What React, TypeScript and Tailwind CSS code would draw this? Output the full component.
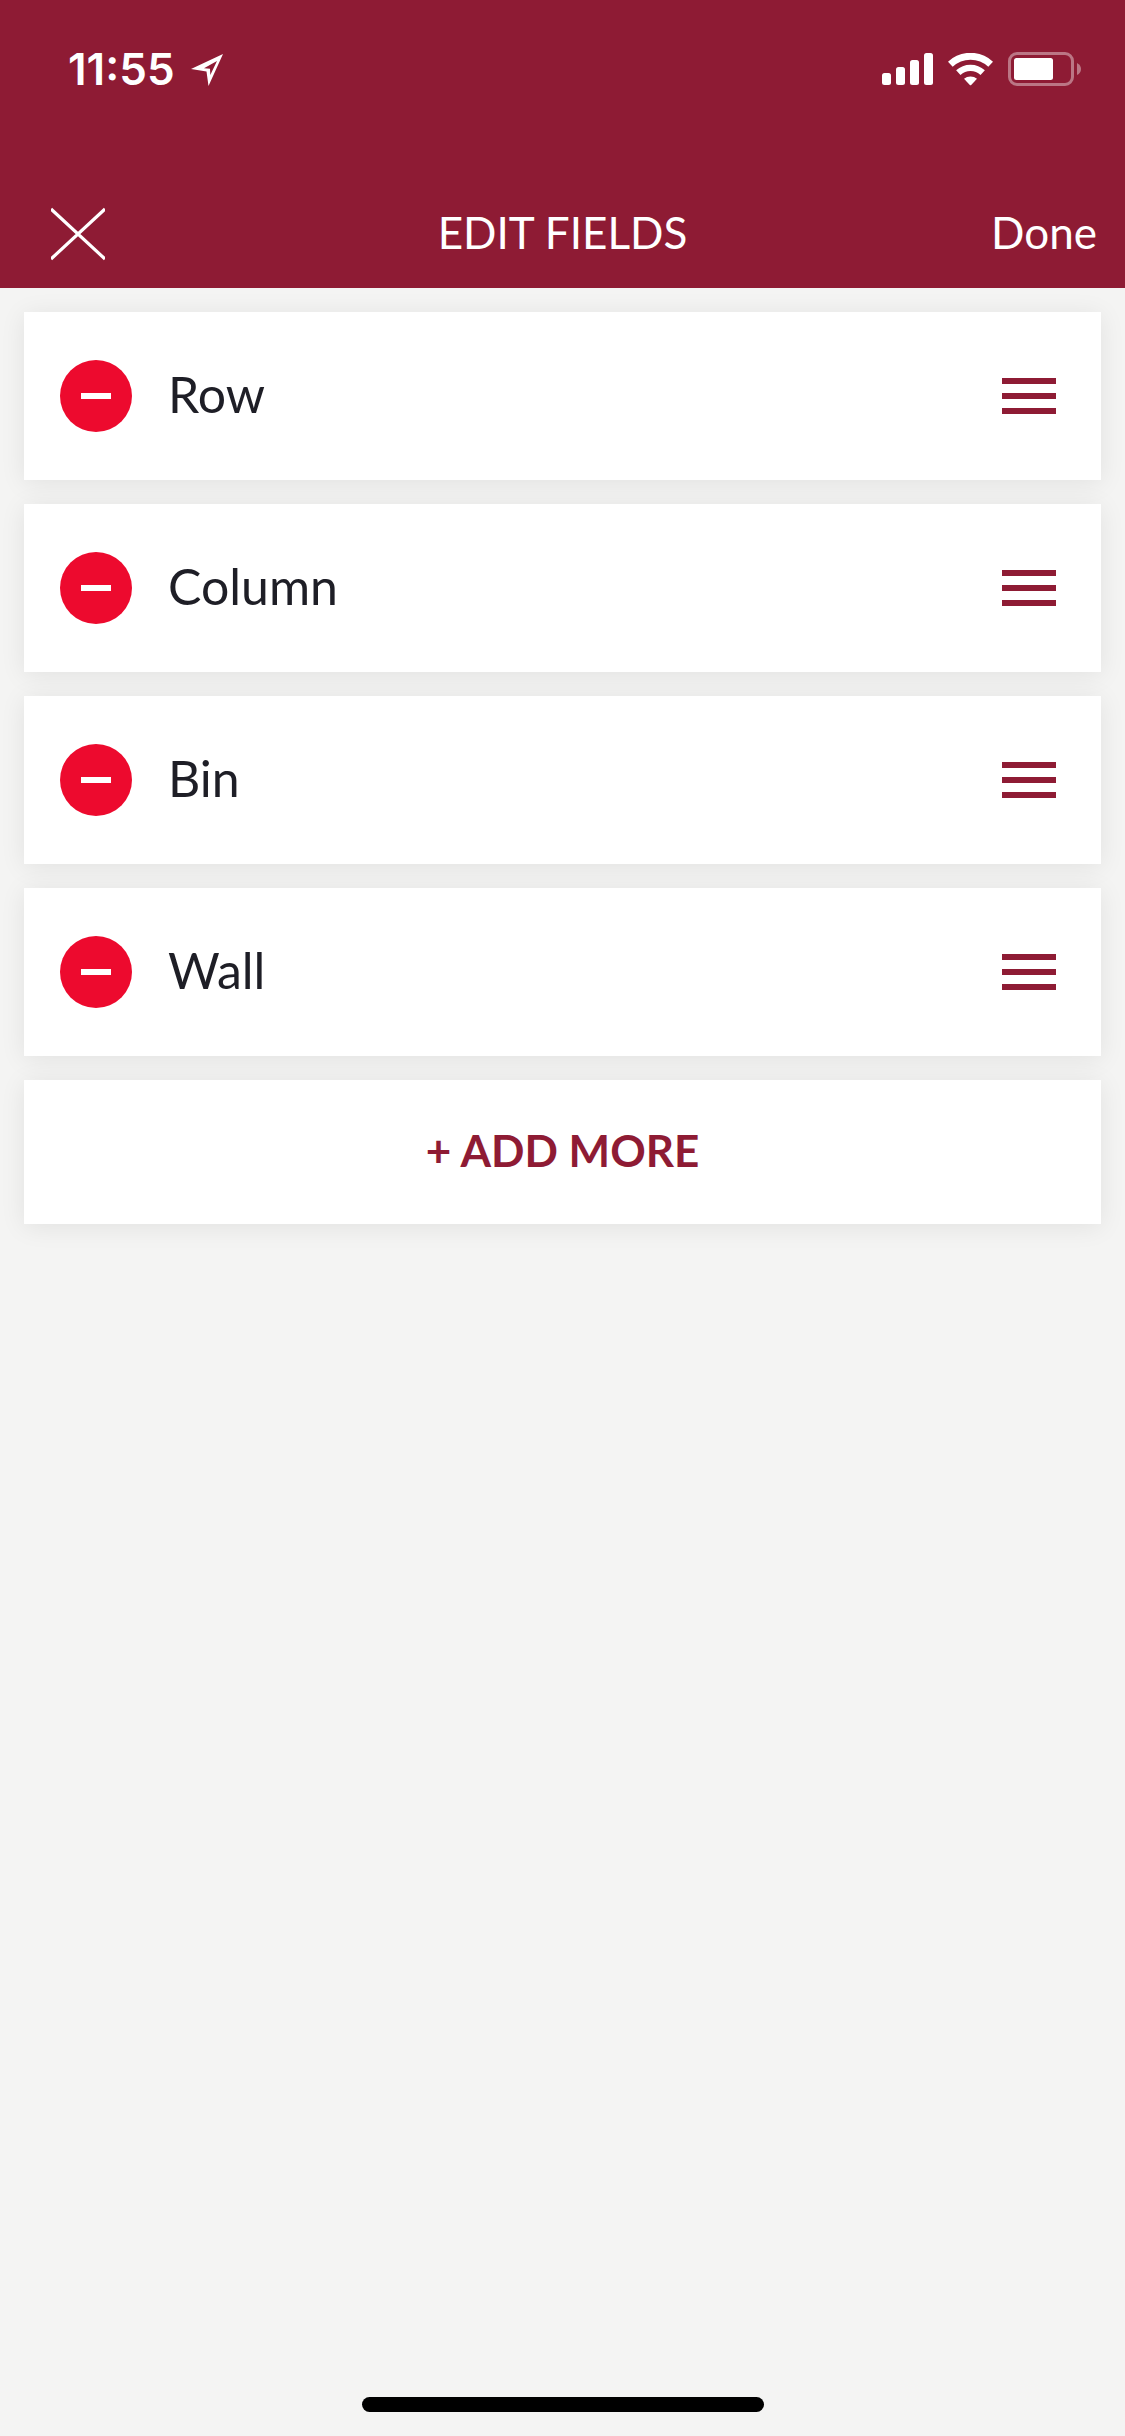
import { useState } from 'react';

const initialFields = ['Row', 'Column', 'Bin', 'Wall'];

function StatusBar() {
  return (
    <div className="flex h-[138px] items-center justify-between pr-11 pl-[68px]">
      <div className="flex items-center gap-4 font-['Inter',sans-serif] text-[44px] leading-none font-semibold">
        <span>11:55</span>
        {/* Location arrow */}
        <svg width="33" height="33" viewBox="0 0 33 33" aria-hidden="true">
          <path
            fill="currentColor"
            fillRule="evenodd"
            d="M0 16 32 1 17.5 33 15.5 18.5ZM13 15.2 19 15.8 19.3 22 26 8Z"
          />
        </svg>
      </div>

      <div className="flex items-center gap-[15px]">
        {/* Signal */}
        <svg width="51" height="33" viewBox="0 0 51 33" fill="currentColor" aria-hidden="true">
          <rect x="0" y="20" width="9" height="12" rx="2.5" />
          <rect x="14" y="14" width="9" height="18" rx="2.5" />
          <rect x="28" y="7" width="9" height="25" rx="2.5" />
          <rect x="42" y="0" width="9" height="32" rx="2.5" />
        </svg>

        {/* Wifi */}
        <svg width="45" height="33" viewBox="0 0 45 33" fill="none" aria-hidden="true">
          <path d="M2.3 11.3a29.5 29.5 0 0 1 40.4 0" stroke="currentColor" strokeWidth="7" />
          <path d="M10.3 19.6a18 18 0 0 1 24.4 0" stroke="currentColor" strokeWidth="6.4" />
          <path d="M16 25.8a10 10 0 0 1 13 0L23.2 32q-.7.6-1.4 0Z" fill="currentColor" />
        </svg>

        {/* Battery */}
        <svg width="73" height="34" viewBox="0 0 73 34" aria-hidden="true">
          <rect
            x="1.5"
            y="1.5"
            width="63"
            height="31"
            rx="7.5"
            fill="none"
            stroke="currentColor"
            strokeOpacity="0.4"
            strokeWidth="3"
          />
          <rect x="6" y="6" width="39" height="22" rx="2.5" fill="currentColor" />
          <path d="M69 11q4 2 4 6t-4 6Z" fill="currentColor" fillOpacity="0.4" />
        </svg>
      </div>
    </div>
  );
}

export default function App() {
  const [fields, setFields] = useState(initialFields);

  const removeField = (name: string) => {
    setFields(fields.filter((field) => field !== name));
  };

  return (
    <div className="flex min-h-screen flex-col bg-[#f4f4f3] font-['Lato',sans-serif] text-[#1e1e26]">
      <header className="bg-[#8e1b34] text-white">
        <StatusBar />
        <nav className="mt-[42px] grid h-[108px] grid-cols-[1fr_auto_1fr] items-center text-[44px] leading-none">
          <button type="button" aria-label="Close" className="ml-[51px] justify-self-start">
            <svg width="54" height="54" viewBox="0 0 54 54" fill="none" aria-hidden="true">
              <path d="M0 2 54 52M54 2 0 52" stroke="currentColor" strokeWidth="3.2" />
            </svg>
          </button>
          <h1 className="pb-1">EDIT FIELDS</h1>
          <button type="button" className="mr-7 justify-self-end pb-1">
            Done
          </button>
        </nav>
      </header>

      <main className="flex flex-col gap-6 p-6">
        <ul className="flex flex-col gap-6">
          {fields.map((field) => (
            <li
              key={field}
              className="flex h-[168px] items-center bg-white pr-[45px] pl-9 shadow-[0_3px_24px_rgba(0,0,0,0.08)]"
            >
              <button
                type="button"
                aria-label={`Remove ${field}`}
                onClick={() => removeField(field)}
                className="flex size-[72px] items-center justify-center rounded-full bg-[#ed0a2e]"
              >
                <span className="h-1.5 w-[30px] bg-white" />
              </button>
              <span className="ml-9 pb-1 text-[50px] leading-none">{field}</span>
              <button
                type="button"
                aria-label={`Reorder ${field}`}
                className="ml-auto flex w-[54px] flex-col gap-[9px]"
              >
                <span className="h-1.5 w-full bg-[#8e1b34]" />
                <span className="h-1.5 w-full bg-[#8e1b34]" />
                <span className="h-1.5 w-full bg-[#8e1b34]" />
              </button>
            </li>
          ))}
        </ul>

        <button
          type="button"
          className="h-36 bg-white pb-1 text-[44px] leading-none font-bold text-[#8e1b34] shadow-[0_3px_24px_rgba(0,0,0,0.08)]"
        >
          + ADD MORE
        </button>
      </main>

      {/* Home indicator */}
      <div className="mx-auto mt-auto mb-6 h-[15px] w-[402px] rounded-full bg-black" />
    </div>
  );
}
